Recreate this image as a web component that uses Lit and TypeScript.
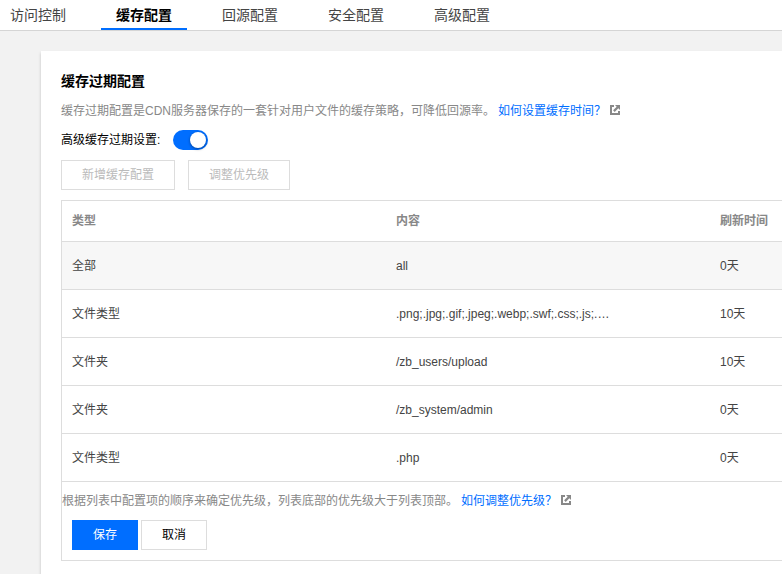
import { LitElement, html, css } from "lit";
import { customElement, property, state } from "lit/decorators.js";
import { classMap } from "lit/directives/class-map.js";

interface CacheRule {
  type: string;
  content: string;
  ttl: string;
}

const TABS = ["访问控制", "缓存配置", "回源配置", "安全配置", "高级配置"];

const RULES: CacheRule[] = [
  { type: "全部", content: "all", ttl: "0天" },
  { type: "文件类型", content: ".png;.jpg;.gif;.jpeg;.webp;.swf;.css;.js;.…", ttl: "10天" },
  { type: "文件夹", content: "/zb_users/upload", ttl: "10天" },
  { type: "文件夹", content: "/zb_system/admin", ttl: "0天" },
  { type: "文件类型", content: ".php", ttl: "0天" },
];

@customElement("help-link")
export class HelpLink extends LitElement {
  @property() label = "";

  static styles = css`
    :host {
      display: inline-flex;
      align-items: center;
    }
    .link {
      display: inline-flex;
      align-items: center;
      gap: 4px;
      color: #006eff;
      text-decoration: none;
    }
    .icon {
      display: block;
      width: 10px;
      height: 10px;
      padding-bottom: 2px;
    }
  `;

  render() {
    return html`<a class="link" href="#help"
      >${this.label}<svg class="icon" viewBox="0 0 10 10" fill="#888" aria-hidden="true">
        <path d="M0 0h4v2H2v6h6V6h2v4H0z" />
        <path d="M5 0h5v5L8.3 3.3 4.7 6.9 3.1 5.3 6.7 1.7z" /></svg
    ></a>`;
  }
}

@customElement("app-root")
export class AppRoot extends LitElement {
  @state() private active = 1;

  static styles = css`
    :host {
      display: flex;
      flex-direction: column;
      box-sizing: border-box;
      min-height: 100vh;
      overflow: hidden;
      background: #f2f2f2;
      color: #000;
      font: 12px/18px "Liberation Sans", "Noto Sans CJK SC", sans-serif;
    }
    .tabs {
      display: flex;
      gap: 50px;
      height: 30px;
      padding-left: 10px;
      border-bottom: 1px solid #d5d5d5;
      background: #fff;
      font-size: 14px;
      line-height: 30px;
    }
    .tab {
      position: relative;
      flex: none;
      color: #444;
      text-decoration: none;
    }
    .tab.active {
      color: #000;
      font-weight: bold;
    }
    .tab.active::after {
      content: "";
      position: absolute;
      left: -15px;
      right: -15px;
      bottom: 0;
      height: 2px;
      background: #006eff;
    }
    .card {
      flex: 1;
      margin: 20px 0 0 41px;
      padding: 20px 0 13px 20px;
      background: #fff;
      box-shadow: 0 2px 3px rgba(0, 0, 0, 0.2);
    }
    .title {
      margin: 0 0 11px;
      font-size: 14px;
      line-height: 20px;
    }
    .hint {
      display: flex;
      gap: 3px;
      margin: 0;
      color: #888;
      white-space: nowrap;
    }
    .setting {
      display: flex;
      align-items: center;
      gap: 13px;
      height: 20px;
      margin: 10px 0;
    }
    .switch {
      appearance: none;
      width: 35px;
      height: 20px;
      margin: 0;
      padding: 2px;
      border-radius: 10px;
      background: #bbb;
      display: flex;
    }
    .switch::before {
      content: "";
      width: 16px;
      height: 16px;
      border-radius: 50%;
      background: #fff;
      box-shadow: 0 1px 3px rgba(0, 0, 0, 0.4);
    }
    .switch:checked {
      justify-content: flex-end;
      background: #006eff;
    }
    .actions {
      display: flex;
      gap: 13px;
      margin-bottom: 10px;
    }
    .btn {
      height: 30px;
      padding: 0 20px;
      border: 1px solid #ddd;
      background: #fff;
      color: #000;
      font: inherit;
    }
    .btn:disabled {
      color: #bbb;
    }
    .btn.primary {
      border-color: #006eff;
      background: #006eff;
      color: #fff;
    }
    .panel {
      border: 1px solid #ddd;
      border-right: 0;
    }
    .rules {
      width: 100%;
      border-collapse: separate;
      border-spacing: 0;
      table-layout: fixed;
      text-align: left;
    }
    .wide {
      width: 45%;
    }
    .head,
    .cell {
      box-sizing: border-box;
      padding: 0 0 0 10px;
      border-bottom: 1px solid #ddd;
      white-space: nowrap;
    }
    .head {
      height: 41px;
      color: #888;
    }
    .cell {
      height: 48px;
      color: #444;
    }
    .row:first-child {
      background: #f7f7f7;
    }
    .panel .hint {
      margin: 10px 0;
    }
    .footer {
      display: flex;
      gap: 3px;
      padding: 0 10px 10px;
    }
  `;

  render() {
    return html`
      <nav class="tabs" lang="zh-CN">
        ${TABS.map(
          (name, i) => html`<a
            href="#tab-${i}"
            class=${classMap({ tab: true, active: i === this.active })}
            @click=${() => (this.active = i)}
            >${name}</a
          >`
        )}
      </nav>
      <main class="card" lang="zh-CN">
        <h2 class="title">缓存过期配置</h2>
        <p class="hint">
          <span>缓存过期配置是CDN服务器保存的一套针对用户文件的缓存策略&#xFF0C;可降低回源率。</span>
          <help-link label="如何设置缓存时间&#xFF1F;"></help-link>
        </p>
        <div class="setting">
          <label for="advanced">高级缓存过期设置:</label>
          <input id="advanced" class="switch" type="checkbox" role="switch" checked />
        </div>
        <div class="actions">
          <button class="btn" disabled>新增缓存配置</button>
          <button class="btn" disabled>调整优先级</button>
        </div>
        <section class="panel">
          <table class="rules">
            <thead>
              <tr>
                <th class="head wide" scope="col">类型</th>
                <th class="head wide" scope="col">内容</th>
                <th class="head" scope="col">刷新时间</th>
              </tr>
            </thead>
            <tbody>
              ${RULES.map(
                (rule) => html`<tr class="row">
                  <td class="cell">${rule.type}</td>
                  <td class="cell">${rule.content}</td>
                  <td class="cell">${rule.ttl}</td>
                </tr>`
              )}
            </tbody>
          </table>
          <p class="hint">
            <span>根据列表中配置项的顺序来确定优先级&#xFF0C;列表底部的优先级大于列表顶部。</span>
            <help-link label="如何调整优先级&#xFF1F;"></help-link>
          </p>
          <div class="footer">
            <button class="btn primary">保存</button>
            <button class="btn">取消</button>
          </div>
        </section>
      </main>
    `;
  }
}
